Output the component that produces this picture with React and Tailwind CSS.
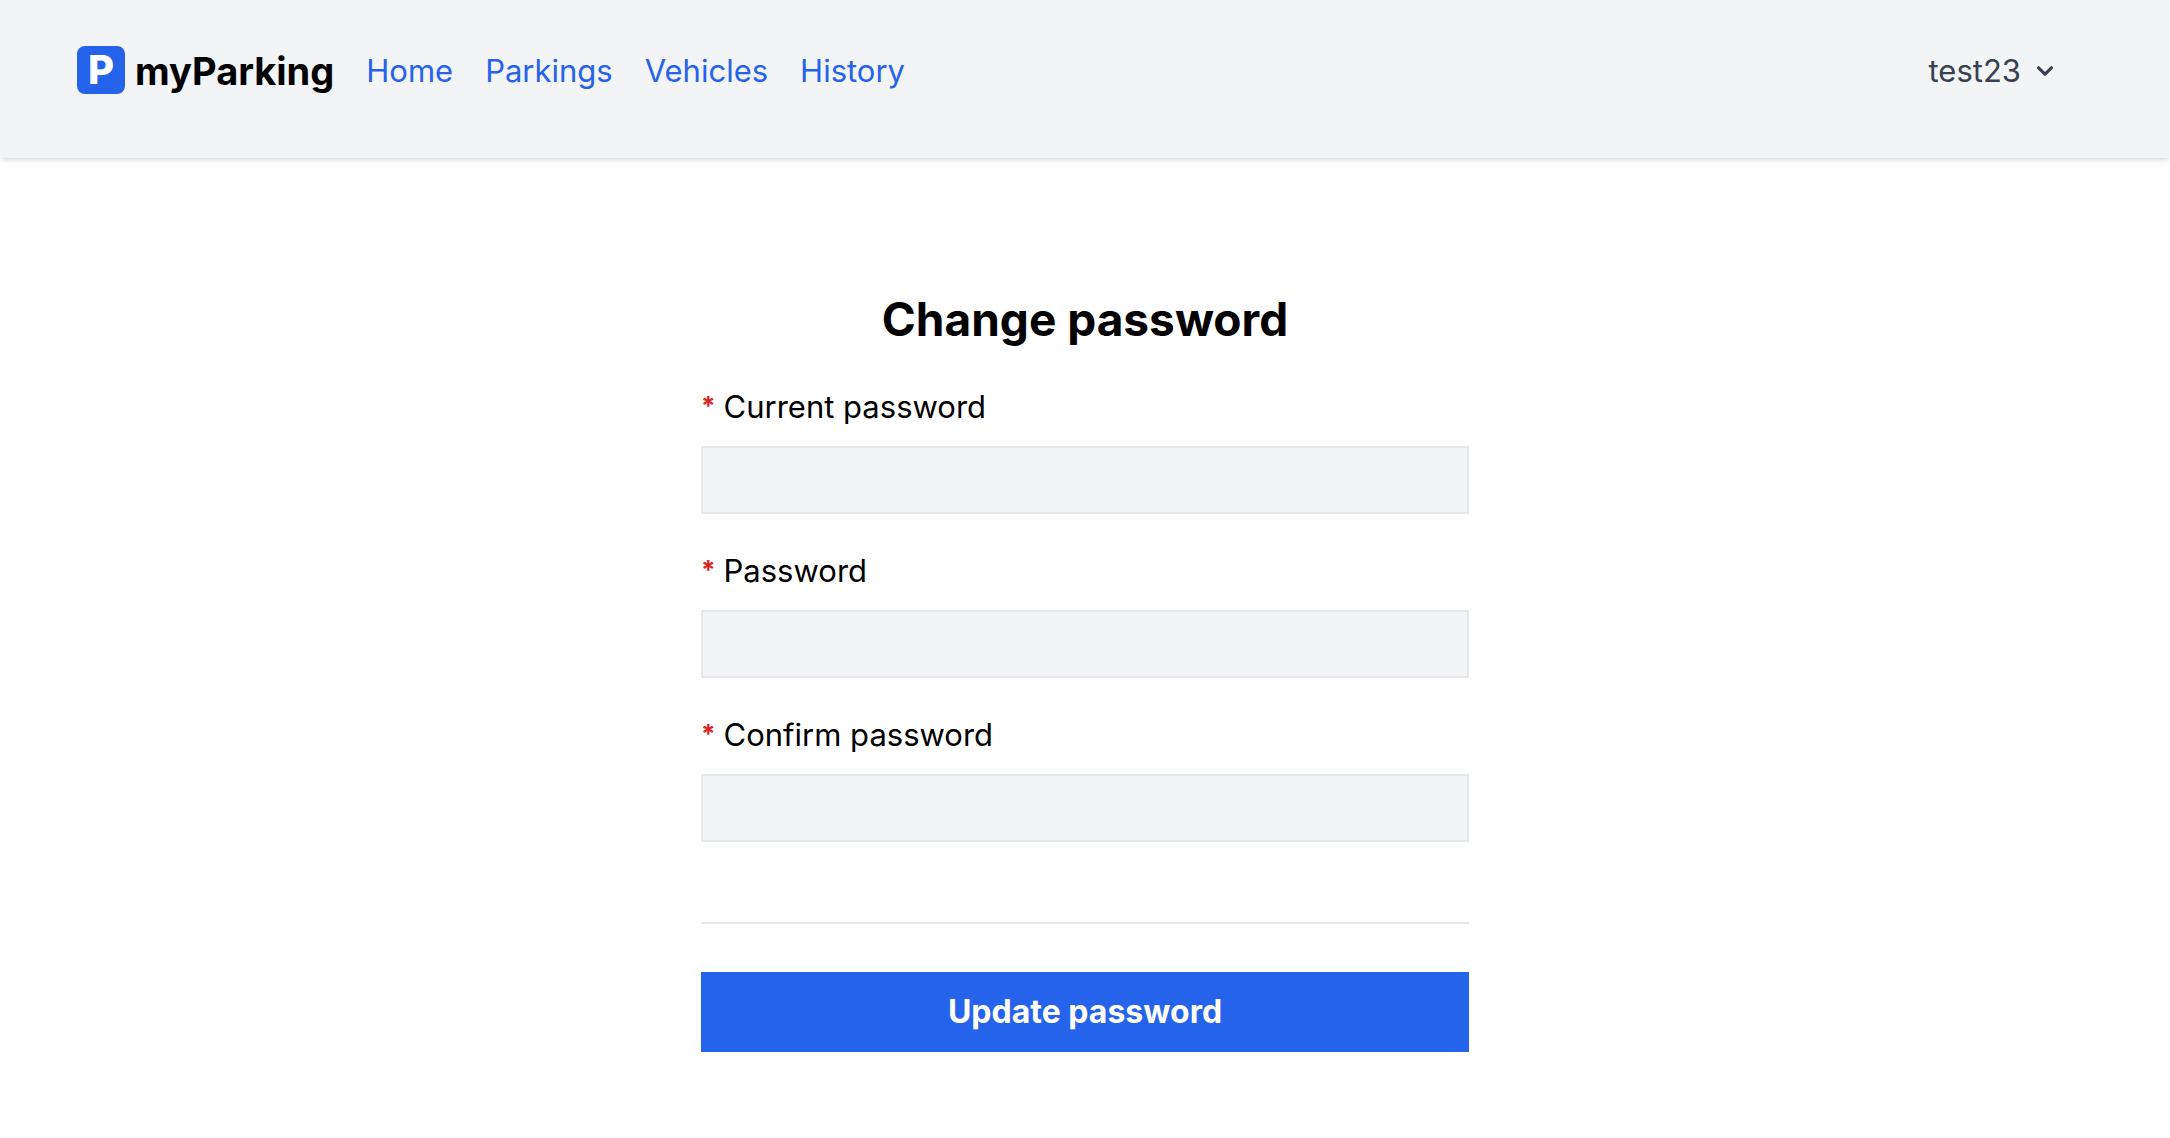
const links = ['Home', 'Parkings', 'Vehicles', 'History'];
const fields = [
  ['current', 'Current password'],
  ['password', 'Password'],
  ['confirm', 'Confirm password'],
];

export default function App() {
  return (
    <div className="min-h-screen bg-white font-['Inter',sans-serif] text-[31px] leading-[48px] text-black">
      <header className="bg-[#f3f4f6] shadow-[0_2px_6px_rgba(0,0,0,0.1),0_2px_4px_-2px_rgba(0,0,0,0.1)]">
        <div className="flex items-start justify-between pt-[46px] pr-[109px] pb-[62px] pl-[77px] leading-[50px]">
          <div className="flex items-start gap-8">
            <h2 className="flex items-start gap-2.5 text-[38px] font-bold">
              <span className="flex size-12 items-center justify-center rounded-lg bg-[#2563eb] text-[40px] font-extrabold text-white">P</span>
              myParking
            </h2>
            <nav className="flex gap-8">
              {links.map((l) => (
                <a key={l} href="#" className="text-[#2563eb]">{l}</a>
              ))}
            </nav>
          </div>
          <button type="button" className="flex items-center gap-2 text-[#374151]">
            test23
            <svg className="size-8" viewBox="0 0 20 20" fill="currentColor" aria-hidden="true">
              <path fillRule="evenodd" clipRule="evenodd" d="M5.293 7.293a1 1 0 011.414 0L10 10.586l3.293-3.293a1 1 0 111.414 1.414l-4 4a1 1 0 01-1.414 0l-4-4a1 1 0 010-1.414z" />
            </svg>
          </button>
        </div>
      </header>
      <main className="mx-auto w-full max-w-[768px] pt-[129px]">
        <form>
          <h1 className="mb-8 text-center text-[46px] leading-[64px] font-bold">Change password</h1>
          <div className="flex flex-col gap-[33px]">
            {fields.map(([id, label]) => (
              <div key={id} className="flex flex-col gap-[15px]">
                <label htmlFor={id} className="flex items-start gap-2">
                  <span className="text-[26px] leading-[46px] font-bold text-[#dc2626]">*</span>
                  {label}
                </label>
                <input id={id} type="password" className="h-[68px] w-full border-2 border-[#e5e7eb] bg-[#f3f4f6] px-4" />
              </div>
            ))}
          </div>
          <hr className="mt-20 mb-12 border-t-2 border-[#e5e7eb]" />
          <button type="button" className="w-full bg-[#2563eb] py-4 text-[32px] leading-[48px] font-bold text-white">
            Update password
          </button>
        </form>
      </main>
    </div>
  );
}
